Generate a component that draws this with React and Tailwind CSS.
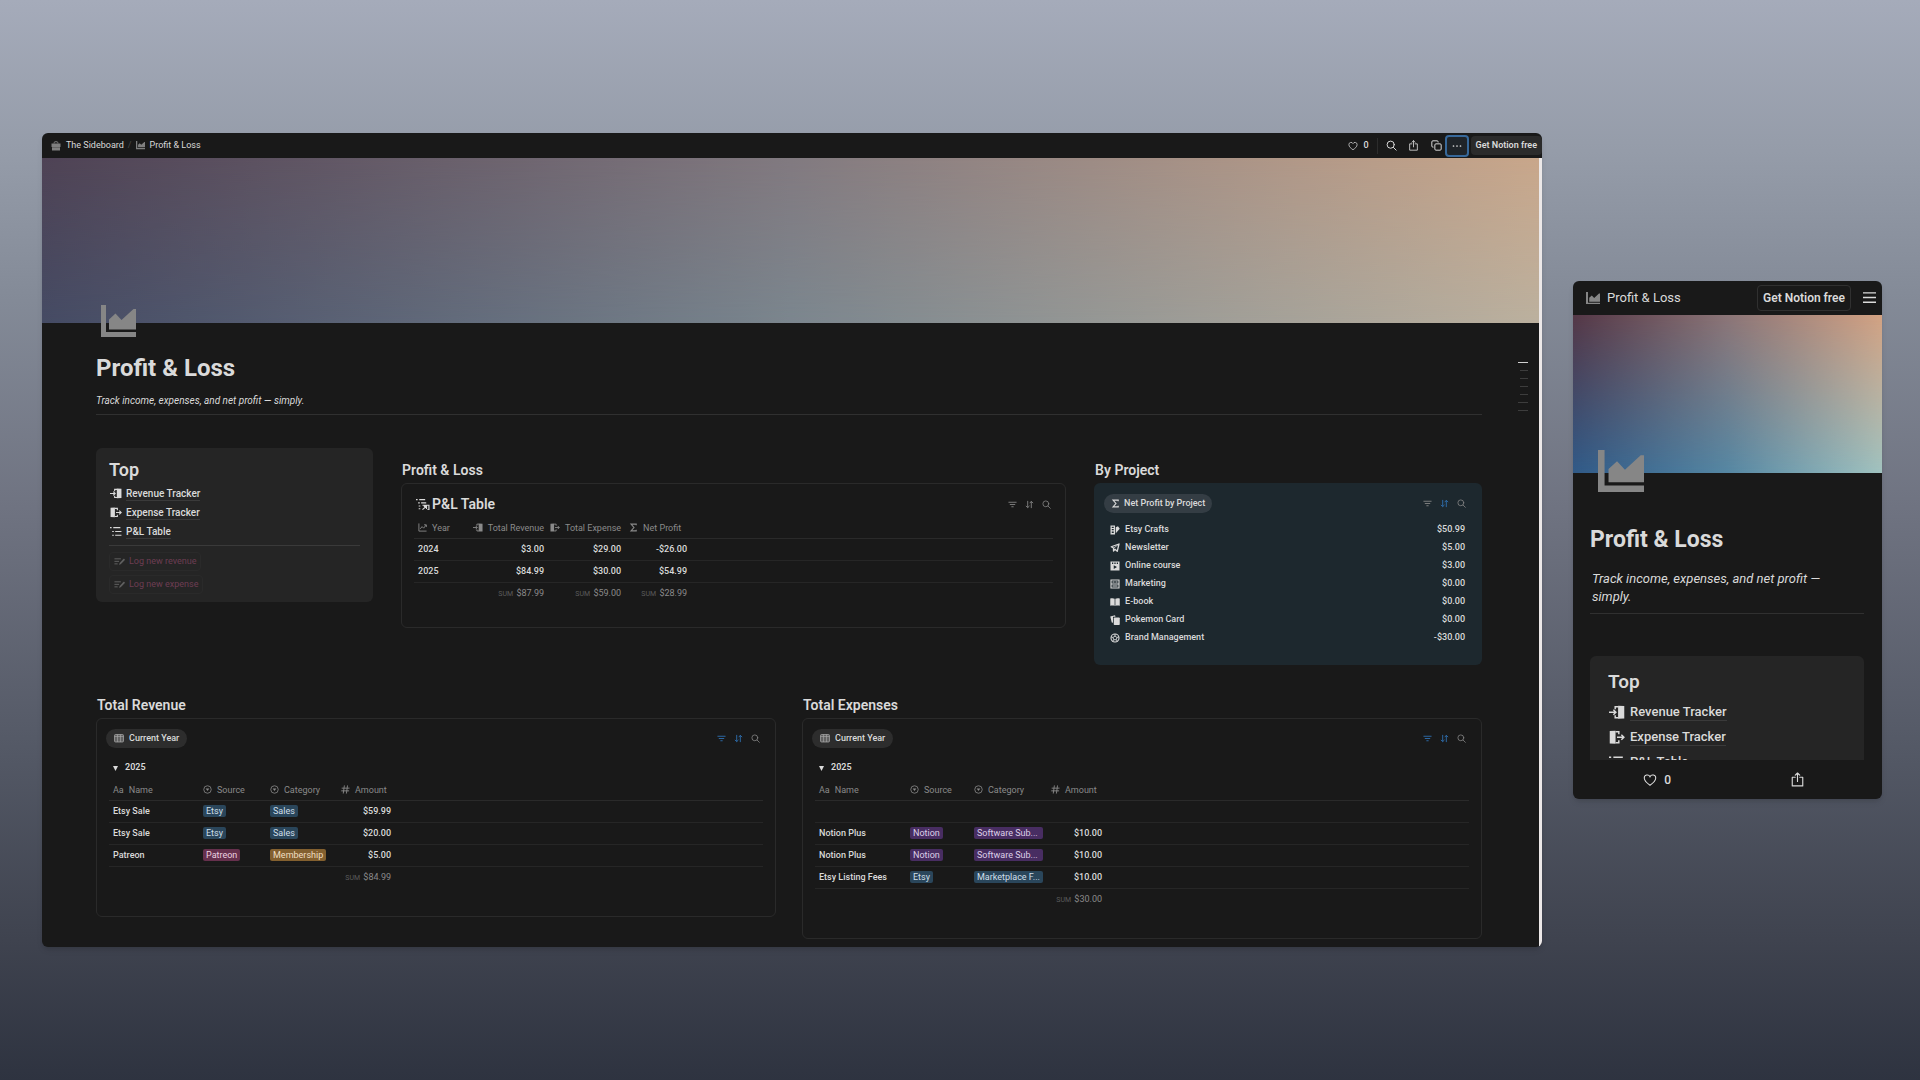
import React from "react";
import clsx from "clsx";

/* ---------- Icons ---------- */

const ChartIcon = ({ className }) => (
  <svg viewBox="0 0 35 32" className={className} fill="currentColor" aria-hidden="true">
    <path d="M0 0h5v27h30v5H0z" />
    <path d="M8 14.500 14.500 8.500 20.500 15 32.500 4H35v20.500H8z" />
  </svg>
);

const BagIcon = ({ className }) => (
  <svg viewBox="0 0 20 20" className={className} fill="currentColor" aria-hidden="true">
    <path d="M1 5h18v7H1zM2 12.500h16V19H2z" />
    <path d="M6 5V3L8 1.500h4L14 3v2" fill="none" stroke="currentColor" strokeWidth="2" />
  </svg>
);

const HeartIcon = ({ className }) => (
  <svg viewBox="0 0 20 20" className={className} fill="none" stroke="currentColor" strokeWidth="1.500" aria-hidden="true">
    <path d="M10 17.500C6 14.800 1.800 11.500 1.800 7.300A4.300 4.300 0 0 1 10 5.300a4.300 4.300 0 0 1 8.200 2c0 4.200-4.200 7.500-8.200 10.200z" />
  </svg>
);

const SearchIcon = ({ className }) => (
  <svg viewBox="0 0 20 20" className={className} fill="none" stroke="currentColor" strokeWidth="1.800" strokeLinecap="round" aria-hidden="true">
    <circle cx="8.500" cy="8.500" r="6.500" />
    <path d="m13.500 13.500 5 5" />
  </svg>
);

const ShareIcon = ({ className }) => (
  <svg viewBox="0 0 20 20" className={className} fill="none" stroke="currentColor" strokeWidth="1.500" strokeLinecap="round" strokeLinejoin="round" aria-hidden="true">
    <path d="M7 7H3v11.500h14V7h-4M10 12.500V1.500M7 4.200l3-2.900 3 2.900" />
  </svg>
);

const CopyIcon = ({ className }) => (
  <svg viewBox="0 0 20 20" className={className} fill="none" stroke="currentColor" strokeWidth="1.800" strokeLinejoin="round" aria-hidden="true">
    <rect x="7" y="7" width="11.500" height="11.500" rx="2" />
    <path d="M4.500 13H3.500a2 2 0 0 1-2-2V3.500a2 2 0 0 1 2-2H11a2 2 0 0 1 2 2v1" />
  </svg>
);

const DotsIcon = ({ className }) => (
  <svg viewBox="0 0 20 20" className={className} fill="currentColor" aria-hidden="true">
    <circle cx="3" cy="10" r="1.700" />
    <circle cx="10" cy="10" r="1.700" />
    <circle cx="17" cy="10" r="1.700" />
  </svg>
);

const MenuIcon = ({ className }) => (
  <svg viewBox="0 0 14 12" className={className} stroke="currentColor" strokeWidth="1.500" aria-hidden="true">
    <path d="M0 1h14M0 6h14M0 11h14" />
  </svg>
);

const EnterIcon = ({ className }) => (
  <svg viewBox="0 0 22 20" className={className} fill="currentColor" aria-hidden="true">
    <path d="M12.500 1 21 1.500v17l-8.500.5z" />
    <path d="M13 2.500H8.500V6M8.500 14v3.500H13M0 10h9M6 6.500 9.500 10 6 13.500" fill="none" stroke="currentColor" strokeWidth="2" />
  </svg>
);

const ExitIcon = ({ className }) => (
  <svg viewBox="0 0 22 20" className={className} fill="currentColor" aria-hidden="true">
    <path d="M1 1.500 9 1v18l-8-.5z" />
    <path d="M9 2.500h4.500V6M13.500 14v3.500H9M11 10h9M17 6.500l3.500 3.500-3.500 3.500" fill="none" stroke="currentColor" strokeWidth="2" />
  </svg>
);

const OutlineIcon = ({ className }) => (
  <svg viewBox="0 0 22 20" className={className} stroke="currentColor" strokeWidth="2" aria-hidden="true">
    <path d="M0 3h3M6 3h13M4 10h3M9.500 10H21M4 17h3M9.500 17H21" />
  </svg>
);

const OutlineLinkIcon = ({ className }) => (
  <svg viewBox="0 0 26 24" className={className} stroke="currentColor" strokeWidth="2" fill="none" aria-hidden="true">
    <path d="M0 3h3M6 3h11M4 9h3M9.500 9H19M5 15h3M5 20h3" />
    <path d="M12 13.500h12V22H21M12 21.500l7-6M14.500 15.500H19.500V20.500" strokeWidth="2.200" />
  </svg>
);

const ComposeIcon = ({ className }) => (
  <svg viewBox="0 0 24 20" className={className} stroke="currentColor" strokeWidth="2" fill="none" aria-hidden="true">
    <path d="M1 4h14M1 9.500h10M1 15h7" />
    <path d="m12 16.500 1-3.500 8.500-9 2 2-8.500 9z" fill="currentColor" strokeWidth="1" />
  </svg>
);

const LineChartIcon = ({ className }) => (
  <svg viewBox="0 0 20 20" className={className} stroke="currentColor" strokeWidth="2" fill="none" aria-hidden="true">
    <path d="M2 1v17h17M5 13l4-5 3.500 3.500L18 4.500M13.500 4H18.500V9" />
  </svg>
);

const SigmaIcon = ({ className }) => (
  <svg viewBox="0 0 20 20" className={className} stroke="currentColor" strokeWidth="2.500" fill="none" aria-hidden="true">
    <path d="M16 5V2.500H4.500L11 10l-6.500 7.500H16V15" />
  </svg>
);

const SelectIcon = ({ className }) => (
  <svg viewBox="0 0 20 20" className={className} aria-hidden="true">
    <circle cx="10" cy="10" r="8.300" fill="none" stroke="currentColor" strokeWidth="1.800" />
    <path d="M6 8h8l-4 5.500z" fill="currentColor" />
  </svg>
);

const HashIcon = ({ className }) => (
  <svg viewBox="0 0 20 20" className={className} stroke="currentColor" strokeWidth="2" aria-hidden="true">
    <path d="M7.500 1 5 19M14.500 1 12 19M1.500 7h17.500M.5 13H18" />
  </svg>
);

const TableIcon = ({ className }) => (
  <svg viewBox="0 0 20 18" className={className} aria-hidden="true">
    <rect x="1" y="1" width="18" height="15" rx="2" fill="currentColor" fillOpacity="0.45" stroke="currentColor" strokeWidth="1.500" />
    <path d="M7 1v15M13 1v15M1 5h18" stroke="currentColor" strokeWidth="1.300" />
  </svg>
);

const FilterIcon = ({ className }) => (
  <svg viewBox="0 0 20 20" className={className} stroke="currentColor" strokeWidth="2" aria-hidden="true">
    <path d="M1 5h18M4 10h12M7.500 15h5" />
  </svg>
);

const SortIcon = ({ className }) => (
  <svg viewBox="0 0 20 20" className={className} stroke="currentColor" strokeWidth="2" fill="none" aria-hidden="true">
    <path d="M6 2v15M2 13l4 4 4-4M14 18V3M10.500 7 14 3l4 4" />
  </svg>
);

const SwatchIcon = ({ className }) => (
  <svg viewBox="0 0 20 20" className={className} fill="currentColor" aria-hidden="true">
    <path fillRule="evenodd" d="M1 1h9v18H1zM3.500 3.500v2.500h4V3.500zM3.500 8.200v2.500h4V8.200zM3.500 13v3h4v-3z" />
    <path d="M11.500 4.500 16 2.500l3.500 5-8 9z" />
  </svg>
);

const PlaneIcon = ({ className }) => (
  <svg viewBox="0 0 20 20" className={className} fill="none" stroke="currentColor" strokeWidth="2.600" strokeLinejoin="round" aria-hidden="true">
    <path d="M18 2 2.500 7.500 7 10v6l3-3.500 4.500 4z" />
    <path d="M7 10.500 17.500 2.500" strokeWidth="1.500" />
  </svg>
);

const VideoIcon = ({ className }) => (
  <svg viewBox="0 0 20 20" className={className} fill="currentColor" aria-hidden="true">
    <path fillRule="evenodd" d="M1 1h18v18H1zM4 3v3h2.500V3zM8.700 3v3h2.600V3zM13.500 3v3H16V3zM7.500 8.500v7.500l6.500-3.800z" />
  </svg>
);

const NewsIcon = ({ className }) => (
  <svg viewBox="0 0 20 20" className={className} fill="none" stroke="currentColor" strokeWidth="2.200" aria-hidden="true">
    <path d="M2 2h16v16H2zM2 10h16M5 6h4M11 6h4M5 14h10" />
  </svg>
);

const BookIcon = ({ className }) => (
  <svg viewBox="0 0 20 20" className={className} fill="currentColor" aria-hidden="true">
    <path d="M.5 3C4 2 7 2.200 9.300 3.500v14.300C7 16.600 4 16.500.500 17.300zM19.500 3c-3.500-1-6.500-.8-8.800.5v14.300c2.300-1.200 5.300-1.300 8.800-.5z" />
  </svg>
);

const CardsIcon = ({ className }) => (
  <svg viewBox="0 0 20 20" className={className} fill="currentColor" aria-hidden="true">
    <path d="M.5 3 10 .5l1 3H6v12l-2.500-.5z" />
    <rect x="7.500" y="5" width="12" height="15" rx="1.500" />
  </svg>
);

const BallIcon = ({ className }) => (
  <svg viewBox="0 0 20 20" className={className} fill="none" stroke="currentColor" strokeWidth="2.200" aria-hidden="true">
    <circle cx="10" cy="10" r="8" />
    <path d="m10 6 4 3-1.500 4.500h-5L6 9zM10 6V2M14 9l4-1.500M12.500 13.500 15 17M7.500 13.500 5 17M6 9 2 7.500" strokeWidth="1.800" />
  </svg>
);

/* ---------- Data ---------- */

const topLinks = [
  { label: "Revenue Tracker", Icon: EnterIcon },
  { label: "Expense Tracker", Icon: ExitIcon },
  { label: "P&L Table", Icon: OutlineIcon },
];

const projects = [
  { name: "Etsy Crafts", amount: "$50.99", Icon: SwatchIcon },
  { name: "Newsletter", amount: "$5.00", Icon: PlaneIcon },
  { name: "Online course", amount: "$3.00", Icon: VideoIcon },
  { name: "Marketing", amount: "$0.00", Icon: NewsIcon },
  { name: "E-book", amount: "$0.00", Icon: BookIcon },
  { name: "Pokemon Card", amount: "$0.00", Icon: CardsIcon },
  { name: "Brand Management", amount: "-$30.00", Icon: BallIcon },
];

const years = [
  ["2024", "$3.00", "$29.00", "-$26.00"],
  ["2025", "$84.99", "$30.00", "$54.99"],
];

const revenue = [
  { name: "Etsy Sale", source: "Etsy", category: "Sales", amount: "$59.99" },
  { name: "Etsy Sale", source: "Etsy", category: "Sales", amount: "$20.00" },
  { name: "Patreon", source: "Patreon", category: "Membership", amount: "$5.00" },
];

const expenses = [
  {},
  { name: "Notion Plus", source: "Notion", category: "Software Sub...", amount: "$10.00" },
  { name: "Notion Plus", source: "Notion", category: "Software Sub...", amount: "$10.00" },
  { name: "Etsy Listing Fees", source: "Etsy", category: "Marketplace F...", amount: "$10.00" },
];

const tagColors = {
  Etsy: "w-fit bg-[#2a465b] text-[#cfdfea]",
  Sales: "w-fit bg-[#2a465b] text-[#cfdfea]",
  "Marketplace F...": "bg-[#2a465b] text-[#cfdfea]",
  Patreon: "w-fit bg-[#66304d] text-[#ecd3e0]",
  Membership: "w-fit bg-[#83602f] text-[#f0dfc2]",
  Notion: "w-fit bg-[#482d62] text-[#ddd0e8]",
  "Software Sub...": "bg-[#482d62] text-[#ddd0e8]",
};

/* ---------- Shared pieces ---------- */

const Tag = ({ children }) => (
  <span className={clsx("block rounded-xs px-[3px] text-[9px] leading-3 font-normal", tagColors[children])}>{children}</span>
);

const Sum = ({ children }) => (
  <>
    <span className="mr-px text-[7px] text-[#5c5c5c]">SUM</span> {children}
  </>
);

const Toolbar = ({ filter, sort }) => (
  <div className="flex items-center gap-2">
    <button aria-label="Filter" className={filter ? "text-[#2f6fb0]" : "text-[#858585]"}>
      <FilterIcon className="size-[9px]" />
    </button>
    <button aria-label="Sort" className={sort ? "text-[#2f6fb0]" : "text-[#858585]"}>
      <SortIcon className="size-[9px]" />
    </button>
    <button aria-label="Search" className="text-[#858585]">
      <SearchIcon className="size-[9px]" />
    </button>
  </div>
);

const Th = ({ icon, children, right }) => (
  <th className="h-5 px-1 font-normal text-[#8a8a8a]">
    <span className={clsx("flex items-center gap-[5px] whitespace-nowrap [&>svg]:shrink-0", right && "justify-end")}>
      {icon}
      {children}
    </span>
  </th>
);

const Td = ({ children, right, muted }) => (
  <td className={clsx("h-[22px] px-1 whitespace-nowrap", right && "text-right", muted ? "text-[#8a8a8a]" : "font-medium")}>
    {children}
  </td>
);

const LedgerTable = ({ title, rows, sum, columns }) => (
  <section>
    <h2 className="mb-[3px] px-px text-[14px] leading-5 font-semibold">{title}</h2>
    <div className="rounded-md border border-[#2a2a2a] px-3 pt-[10px] pb-7">
      <div className="-ml-[3px] flex items-center justify-between pr-[3px]">
        <button className="flex h-[19px] items-center gap-[5px] rounded-full bg-[#2d2d2d] px-2 text-[9px] font-medium">
          <TableIcon className="w-[10px] text-[#a5a5a5]" />
          Current Year
        </button>
        <Toolbar filter sort />
      </div>
      <button className="mt-2 flex h-6 items-center gap-[7px] px-1 text-[9px] font-semibold">
        <svg viewBox="0 0 5 5" className="size-[5px]" fill="currentColor" aria-hidden="true">
          <path d="M0 0h5L2.500 5z" />
        </svg>
        2025
      </button>
      <table className="w-full table-fixed border-collapse text-left text-[9px] leading-3">
        <colgroup>
          {columns.map((width, index) => (
            <col key={index} className={width} />
          ))}
          <col />
        </colgroup>
        <thead>
          <tr className="border-b border-[#2a2a2a]">
            <Th icon={<span>Aa</span>}>Name</Th>
            <Th icon={<SelectIcon className="size-[9px]" />}>Source</Th>
            <Th icon={<SelectIcon className="size-[9px]" />}>Category</Th>
            <Th icon={<HashIcon className="size-[9px]" />}>Amount</Th>
            <td />
          </tr>
        </thead>
        <tbody>
          {rows.map((row, index) => (
            <tr key={index} className="border-b border-[#262626]">
              <Td>{row.name}</Td>
              <Td>{row.source && <Tag>{row.source}</Tag>}</Td>
              <Td>{row.category && <Tag>{row.category}</Tag>}</Td>
              <Td right>{row.amount}</Td>
              <td />
            </tr>
          ))}
        </tbody>
        <tfoot>
          <tr>
            <Td />
            <Td />
            <Td />
            <Td right muted>
              <Sum>{sum}</Sum>
            </Td>
            <td />
          </tr>
        </tfoot>
      </table>
    </div>
  </section>
);

/* ---------- Desktop window ---------- */

const DesktopPage = () => (
  <main className="min-w-0 flex-1 overflow-hidden rounded-md bg-[#191919] text-[#dadada] shadow-md">
    <header className="flex h-[25px] items-center justify-between pl-[9px] text-[9px]">
      <nav className="flex items-center">
        <a href="#sideboard" className="flex items-center gap-[5px]">
          <BagIcon className="size-[10px] text-[#7f7f7f]" />
          The Sideboard
        </a>
        <span className="mx-1 text-[#4a4a4a]">/</span>
        <a href="#profit-loss" className="flex items-center gap-[5px]">
          <ChartIcon className="w-[9px] text-[#7f7f7f]" />
          Profit &amp; Loss
        </a>
      </nav>
      <div className="flex items-center">
        <button className="flex items-center gap-[5px] font-medium">
          <HeartIcon className="size-[10px]" />0
        </button>
        <span className="mx-2 h-4 w-px bg-[#2c2c2c]" />
        <button aria-label="Search">
          <SearchIcon className="size-[11px]" />
        </button>
        <button aria-label="Share" className="ml-[11px]">
          <ShareIcon className="size-[11px]" />
        </button>
        <button aria-label="Duplicate" className="ml-3">
          <CopyIcon className="size-[11px]" />
        </button>
        <button aria-label="More" className="ml-[3px] flex h-[22px] w-6 items-center justify-center rounded-sm border-2 border-[#37689a] bg-[#1f2429]">
          <DotsIcon className="size-[10px]" />
        </button>
        <button className="ml-[2px] h-[19px] rounded-sm bg-[#2b2b2b] px-[5px] font-semibold">Get Notion free</button>
      </div>
    </header>

    <div className="relative border-r-3 border-[#ece8e8] pb-2">
      <div className="relative h-[165px] bg-linear-to-r from-[#4f4355] via-[#827a80] to-[#c9a78b]">
        <div className="absolute inset-0 bg-linear-to-r from-[#454b64] via-[#7b868e] to-[#bbb09e] mask-t-from-0% mask-t-to-100%" />
      </div>

      {/* Page outline markers */}
      <div className="absolute top-[204px] right-[11px] flex flex-col items-end gap-[7px]">
        <span className="h-px w-[10px] bg-[#d0d0d0]" />
        <span className="h-px w-2 bg-[#3d3d3d]" />
        <span className="h-px w-2 bg-[#3d3d3d]" />
        <span className="h-px w-2 bg-[#3d3d3d]" />
        <span className="h-px w-2 bg-[#3d3d3d]" />
        <span className="h-px w-[10px] bg-[#3d3d3d]" />
        <span className="h-px w-[10px] bg-[#3d3d3d]" />
      </div>

      <div className="pr-[57px] pl-[54px]">
        <ChartIcon className="relative -mt-[18px] ml-[5px] w-[35px] text-[#868686]" />
        <h1 className="mt-[15px] text-[24px] leading-8 font-bold">Profit &amp; Loss</h1>
        <p className="mt-[9px] text-[10px] leading-4 italic">Track income, expenses, and net profit — simply.</p>
        <hr className="mt-[5px] border-[#303030]" />

        <div className="mt-[33px] grid grid-cols-[5fr_12fr_7fr] items-start gap-7">
          <section className="rounded-md bg-[#252525] px-[13px] pt-[10px] pb-2">
            <h2 className="text-[18px] leading-6 font-semibold">Top</h2>
            <ul className="mt-[2px]">
              {topLinks.map(({ label, Icon }) => (
                <li key={label} className="flex h-[19px] items-center gap-1 px-px text-[10px] font-medium">
                  <Icon className="w-[12px]" />
                  <a href="#top" className="border-b border-[#3a3a3a] leading-[13px]">
                    {label}
                  </a>
                </li>
              ))}
            </ul>
            <hr className="mt-1 border-[#3a3a3a]" />
            <div className="mt-[6px] flex flex-col items-start gap-1 text-[9px] text-[#6d3d53]">
              <button className="flex h-[19px] items-center gap-1 rounded-sm border border-[#2a2a2a] px-1">
                <ComposeIcon className="w-[11px] text-[#666]" />
                Log new revenue
              </button>
              <button className="flex h-[19px] items-center gap-1 rounded-sm border border-[#2a2a2a] px-1">
                <ComposeIcon className="w-[11px] text-[#666]" />
                Log new expense
              </button>
            </div>
          </section>

          <section className="pt-[10px]">
            <h2 className="mb-px px-px text-[14px] leading-6 font-semibold">Profit &amp; Loss</h2>
            <div className="rounded-md border border-[#2a2a2a] px-3 pt-[10px] pb-[23px]">
              <div className="flex h-5 items-center justify-between px-[2px]">
                <h3 className="flex items-center gap-[2px] text-[14px] font-semibold">
                  <OutlineLinkIcon className="w-[14px]" />
                  P&amp;L Table
                </h3>
                <Toolbar />
              </div>
              <table className="mt-1 w-full table-fixed border-collapse text-left text-[9px] leading-3">
                <colgroup>
                  <col className="w-[52px]" />
                  <col className="w-[82px]" />
                  <col className="w-[77px]" />
                  <col className="w-[66px]" />
                  <col />
                </colgroup>
                <thead>
                  <tr className="border-b border-[#2a2a2a]">
                    <Th icon={<LineChartIcon className="size-[9px]" />}>Year</Th>
                    <Th right icon={<EnterIcon className="w-[10px]" />}>Total Revenue</Th>
                    <Th right icon={<ExitIcon className="w-[10px]" />}>Total Expense</Th>
                    <Th icon={<SigmaIcon className="size-[9px]" />}>Net Profit</Th>
                    <td />
                  </tr>
                </thead>
                <tbody>
                  {years.map(([year, ...amounts]) => (
                    <tr key={year} className="border-b border-[#262626]">
                      <Td>{year}</Td>
                      {amounts.map((amount) => (
                        <Td key={amount} right>
                          {amount}
                        </Td>
                      ))}
                      <td />
                    </tr>
                  ))}
                </tbody>
                <tfoot>
                  <tr>
                    <Td />
                    {["$87.99", "$59.00", "$28.99"].map((total) => (
                      <Td key={total} right muted>
                        <Sum>{total}</Sum>
                      </Td>
                    ))}
                    <td />
                  </tr>
                </tfoot>
              </table>
            </div>
          </section>

          <section className="pt-[10px]">
            <h2 className="mb-px px-px text-[14px] leading-6 font-semibold">By Project</h2>
            <div className="rounded-md bg-[#1d282e] px-[10px] pt-[11px] pb-[18px]">
              <div className="flex items-center justify-between pr-[6px]">
                <button className="flex h-[19px] items-center gap-1 rounded-full bg-[#343d44] px-[7px] text-[9px] font-medium">
                  <SigmaIcon className="size-[9px]" />
                  Net Profit by Project
                </button>
                <Toolbar sort />
              </div>
              <ul className="mt-2 pr-[7px] pl-[6px]">
                {projects.map(({ name, amount, Icon }) => (
                  <li key={name} className="flex h-[18px] items-center gap-[5px] text-[9px] font-medium">
                    <Icon className="size-[10px]" />
                    {name}
                    <span className="ml-auto">{amount}</span>
                  </li>
                ))}
              </ul>
            </div>
          </section>
        </div>

        <div className="mt-[30px] grid grid-cols-2 items-start gap-[26px]">
          <LedgerTable
            title="Total Revenue"
            rows={revenue}
            sum="$84.99"
            columns={["w-[90px]", "w-[67px]", "w-[71px]", "w-[58px]"]}
          />
          <LedgerTable
            title="Total Expenses"
            rows={expenses}
            sum="$30.00"
            columns={["w-[91px]", "w-[64px]", "w-[77px]", "w-[59px]"]}
          />
        </div>
      </div>
    </div>
  </main>
);

/* ---------- Phone window ---------- */

const PhonePage = () => (
  <aside className="w-[309px] shrink-0 overflow-hidden rounded-md bg-[#191919] text-[#dadada] shadow-md">
    <header className="flex h-[34px] items-center pr-[6px] pl-[13px] text-[13px]">
      <a href="#profit-loss" className="flex items-center gap-[7px]">
        <ChartIcon className="w-[14px] text-[#868686]" />
        Profit &amp; Loss
      </a>
      <button className="ml-auto h-[26px] rounded-sm border border-[#303030] px-[5px] text-[12px] font-semibold">
        Get Notion free
      </button>
      <button aria-label="Menu" className="ml-3">
        <MenuIcon className="w-[13px]" />
      </button>
    </header>

    <div className="h-[445px] overflow-hidden">
      <div className="relative h-[158px] bg-linear-to-r from-[#553847] via-[#8c7577] to-[#d3a283]">
        <div className="absolute inset-0 bg-linear-to-r from-[#305a88] via-[#5587a3] to-[#a0c2bf] mask-t-from-0% mask-t-to-100%" />
      </div>
      <div className="pr-[18px] pl-[17px]">
        <ChartIcon className="relative -mt-[23px] ml-2 w-[46px] text-[#868686]" />
        <h2 className="mt-8 text-[23px] leading-8 font-bold">Profit &amp; Loss</h2>
        <p className="mt-[14px] px-[2px] text-[13px] leading-[18px] italic">
          Track income, expenses, and net profit — simply.
        </p>
        <hr className="mt-[7px] border-[#303030]" />

        <section className="mt-[42px] rounded-md bg-[#252525] px-[18px] pt-3 pb-6">
          <h3 className="text-[19px] leading-7 font-semibold">Top</h3>
          <ul className="mt-[4px]">
            {topLinks.map(({ label, Icon }) => (
              <li key={label} className="flex h-[25px] items-center gap-[5px] px-px text-[13px] font-medium">
                <Icon className="w-[16px]" />
                <a href="#top" className="border-b border-[#3a3a3a] leading-4">
                  {label}
                </a>
              </li>
            ))}
          </ul>
        </section>
      </div>
    </div>

    <footer className="grid h-[39px] grid-cols-2 items-center justify-items-center px-[14px] text-[12px] font-medium">
      <button className="flex items-center gap-[7px]">
        <HeartIcon className="size-[14px]" />0
      </button>
      <button aria-label="Share">
        <ShareIcon className="size-[15px]" />
      </button>
    </footer>
  </aside>
);

const App = () => (
  <div className="flex min-h-screen items-center gap-[31px] bg-[linear-gradient(#a5abba_0%,#959ca9_14%,#848b98_27%,#6f7381_47%,#535865_70%,#3f434f_87%,#2e3340_100%)] pr-[38px] pl-[42px] font-[Roboto,Inter,sans-serif]">
    <DesktopPage />
    <PhonePage />
  </div>
);

export default App;
